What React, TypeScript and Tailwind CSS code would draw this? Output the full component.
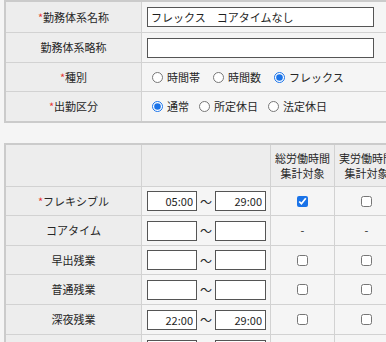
import React from 'react';

const FONT = { fontFamily: '"Noto Sans CJK JP", "Noto Sans", sans-serif' };

type TimeRow = {
  label: string;
  required?: boolean;
  from: string;
  to: string;
  total: boolean | null;
  actual: boolean | null;
  h: string;
};

const timeRows: TimeRow[] = [
  { label: 'フレキシブル', required: true, from: '05:00', to: '29:00', total: true, actual: false, h: 'h-[29px]' },
  { label: 'コアタイム', from: '', to: '', total: null, actual: null, h: 'h-[30px]' },
  { label: '早出残業', from: '', to: '', total: false, actual: false, h: 'h-[29px]' },
  { label: '普通残業', from: '', to: '', total: false, actual: false, h: 'h-[30px]' },
  { label: '深夜残業', from: '22:00', to: '29:00', total: false, actual: false, h: 'h-[30px]' },
  { label: '', from: '', to: '', total: false, actual: false, h: 'h-[30px]' },
];

const Req = () => <span className="text-[#e53935]">*</span>;

const Label = ({ children, required }: { children: React.ReactNode; required?: boolean }) => (
  <div className="w-[136px] shrink-0 border-r border-[#d2d2d2] bg-[#ededed] flex items-center justify-center">
    {required && <Req />}
    {children}
  </div>
);

const Radio = ({ label, checked, name }: { label: string; checked?: boolean; name: string }) => (
  <label className="flex items-center gap-[4px]">
    <input type="radio" name={name} defaultChecked={checked} className="w-[11px] h-[11px] accent-[#1a73e8]" />
    <span>{label}</span>
  </label>
);

const Check = ({ value }: { value: boolean | null }) =>
  value === null ? (
    <span>-</span>
  ) : (
    <input type="checkbox" defaultChecked={value} className="w-[11px] h-[11px] accent-[#1a73e8]" />
  );

export default function App() {
  return (
    <div className="w-[386px] h-[342px] overflow-hidden bg-[#f5f5f5] text-[11px] leading-[15px] text-[#262626]" style={FONT}>
      {/* 基本設定 */}
      <div className="ml-[4px] w-[430px] border-2 border-[#cbcbcb]">
        <div className="flex h-[31px] border-b border-[#d2d2d2]">
          <Label required>勤務体系名称</Label>
          <div className="flex-1 flex items-center pl-[5px]">
            <input
              defaultValue="フレックス　コアタイムなし"
              className="w-[227px] h-[20px] border border-[#555] bg-white px-[3px] text-[11px] text-[#1e1e1e] outline-none"
            />
          </div>
        </div>
        <div className="flex h-[30px] border-b border-[#d2d2d2]">
          <Label>勤務体系略称</Label>
          <div className="flex-1 flex items-center pl-[5px]">
            <input className="w-[227px] h-[20px] border border-[#555] bg-white px-[3px] outline-none" />
          </div>
        </div>
        <div className="flex h-[29px] border-b border-[#d2d2d2]">
          <Label required>種別</Label>
          <div className="flex-1 flex items-center gap-[13px] pl-[10px]">
            <Radio name="kind" label="時間帯" />
            <Radio name="kind" label="時間数" />
            <Radio name="kind" label="フレックス" checked />
          </div>
        </div>
        <div className="flex h-[29px]">
          <Label required>出勤区分</Label>
          <div className="flex-1 flex items-center gap-[10px] pl-[10px]">
            <Radio name="day" label="通常" checked />
            <Radio name="day" label="所定休日" />
            <Radio name="day" label="法定休日" />
          </div>
        </div>
      </div>

      {/* 時間帯設定 */}
      <div className="mt-[20px] ml-[4px] w-[430px] border-2 border-[#cbcbcb]">
        <div className="flex h-[42px] border-b border-[#d2d2d2] bg-[#ededed]">
          <div className="w-[136px] shrink-0 border-r border-[#d2d2d2]" />
          <div className="w-[129px] shrink-0 border-r border-[#d2d2d2]" />
          <div className="w-[64px] shrink-0 border-r border-[#d2d2d2] flex flex-col items-center justify-center">
            <span>総労働時間</span>
            <span>集計対象</span>
          </div>
          <div className="w-[64px] shrink-0 border-r border-[#d2d2d2] flex flex-col items-center justify-center whitespace-nowrap">
            <span>実労働時間</span>
            <span>集計対象</span>
          </div>
        </div>
        {timeRows.map((r, i) => (
          <div key={i} className={`flex border-b border-[#d2d2d2] ${r.h}`}>
            <Label required={r.required}>{r.label}</Label>
            <div className="w-[129px] shrink-0 border-r border-[#d2d2d2] flex items-center pl-[5px]">
              <input
                defaultValue={r.from}
                className="w-[50px] h-[20px] border border-[#555] bg-white px-[3px] text-right text-[11px] text-[#1e1e1e] outline-none"
              />
              <span className="w-[18px] text-center text-[12px]">～</span>
              <input
                defaultValue={r.to}
                className="w-[51px] h-[20px] border border-[#555] bg-white px-[3px] text-right text-[11px] text-[#1e1e1e] outline-none"
              />
            </div>
            <div className="w-[64px] shrink-0 border-r border-[#d2d2d2] flex items-center justify-center">
              <Check value={r.total} />
            </div>
            <div className="w-[64px] shrink-0 border-r border-[#d2d2d2] flex items-center justify-center">
              <Check value={r.actual} />
            </div>
          </div>
        ))}
      </div>
    </div>
  );
}
